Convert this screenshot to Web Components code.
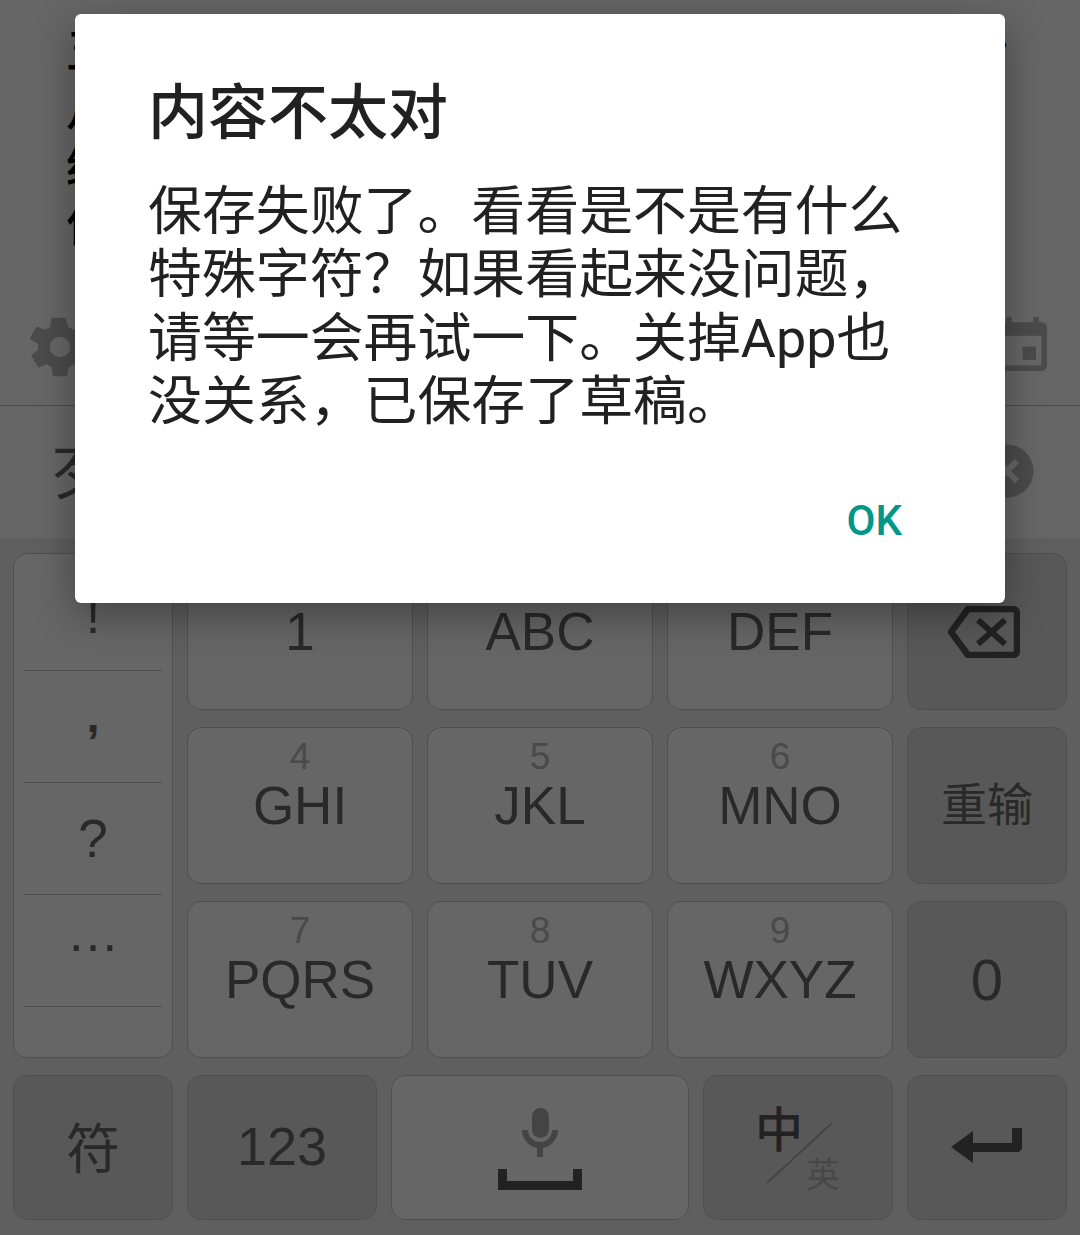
<!DOCTYPE html>
<html>
<head>
<meta charset="utf-8">
<style>
  html, body { margin: 0; padding: 0; height: 100%; overflow: hidden; }
  body { font-family: "Liberation Sans", "Noto Sans CJK SC", sans-serif; }
</style>
</head>
<body>
<x-screen>
  <x-editor></x-editor>
  <x-keyboard>
    <x-symbols></x-symbols>
    <x-key style="grid-area:1/2"><span>1</span></x-key>
    <x-key style="grid-area:1/3"><span>ABC</span></x-key>
    <x-key style="grid-area:1/4"><span>DEF</span></x-key>
    <x-key dark style="grid-area:1/5;padding-right:6px">
      <svg width="72" height="52" viewBox="0 0 72 52"><path d="M20 3H65a4 4 0 0 1 4 4V45a4 4 0 0 1-4 4H20L3 26Z" fill="none" stroke="#555" stroke-width="6.500" stroke-linejoin="round"/><path d="M30 14L57 38M57 14L30 38" stroke="#555" stroke-width="6"/></svg>
    </x-key>
    <x-key num="4" style="grid-area:2/2"><span>GHI</span></x-key>
    <x-key num="5" style="grid-area:2/3"><span>JKL</span></x-key>
    <x-key num="6" style="grid-area:2/4"><span>MNO</span></x-key>
    <x-key dark style="grid-area:2/5;font-size:46px"><span>重输</span></x-key>
    <x-key num="7" style="grid-area:3/2"><span>PQRS</span></x-key>
    <x-key num="8" style="grid-area:3/3"><span>TUV</span></x-key>
    <x-key num="9" style="grid-area:3/4"><span>WXYZ</span></x-key>
    <x-key dark style="grid-area:3/5;font-size:58px"><span>0</span></x-key>
    <x-bottom-row style="grid-area:4/1/5/6"></x-bottom-row>
  </x-keyboard>
  <x-dialog heading="内容不太对">保存失败了。看看是不是有什么特殊字符？如果看起来没问题，请等一会再试一下。关掉App也没关系，已保存了草稿。</x-dialog>
</x-screen>

<script>
class XScreen extends HTMLElement {
  constructor() {
    super();
    this.attachShadow({ mode: "open" });
    this.shadowRoot.innerHTML = `
      <style>
        :host { display: flex; flex-direction: column; position: relative; width: 1080px; height: 1235px; overflow: hidden; background: #fff; }
      </style>
      <slot></slot>
    `;
  }
}

class XEditor extends HTMLElement {
  constructor() {
    super();
    this.attachShadow({ mode: "open" });
    this.shadowRoot.innerHTML = `
      <style>
        :host { display: block; height: 538px; color: #000; flex: none; }
        .text { height: 280px; padding: 22px 72px 0 66px; box-sizing: border-box; font-size: 47px; line-height: 58px; overflow: hidden; white-space: nowrap; font-weight: 500; }
        .first { display: flex; justify-content: space-between; }
        .tools { height: 126px; display: flex; justify-content: space-between; align-items: center; padding: 8px 25px 0 25px; box-sizing: border-box; border-bottom: 1px solid #bbb; }
        .title { height: 132px; display: flex; align-items: center; justify-content: space-between; padding: 0 46px 0 50px; font-size: 58px; color: #666; box-sizing: border-box; }
        .title span { margin-bottom: 6px; }
        .title svg { margin-bottom: 2px; }
      </style>
      <div class="text"><div class="first"><span>五</span><span>行</span></div>月<br>经<br>作</div>
      <div class="tools">
        <svg width="70" height="70" viewBox="0 0 24 24" fill="#bbb"><path d="M19.4 13a7.5 7.5 0 0 0 0-2l2.1-1.6a.5.5 0 0 0 .1-.6l-2-3.5a.5.5 0 0 0-.6-.2l-2.5 1a7.3 7.3 0 0 0-1.7-1L14 2.400a.5.5 0 0 0-.5-.4h-4a.5.5 0 0 0-.5.4l-.4 2.700a7.3 7.3 0 0 0-1.700 1l-2.500-1a.5.5 0 0 0-.6.2l-2 3.500a.5.5 0 0 0 .1.6L4.500 11a7.500 7.500 0 0 0 0 2l-2.100 1.600a.5.5 0 0 0-.1.6l2 3.500c.1.2.4.3.6.2l2.500-1c.5.4 1.100.7 1.700 1l.4 2.700c0 .2.2.4.5.4h4c.3 0 .5-.2.5-.4l.4-2.700a7.300 7.300 0 0 0 1.700-1l2.500 1c.2.1.5 0 .6-.2l2-3.500a.5.5 0 0 0-.1-.6zM12 15.500a3.500 3.500 0 1 1 0-7 3.500 3.500 0 0 1 0 7z"/></svg>
        <svg width="65" height="65" viewBox="0 0 24 24" fill="#bbb"><path d="M17 12h-5v5h5v-5zM16 1v2H8V1H6v2H5c-1.110 0-1.990.9-1.990 2L3 19c0 1.100.89 2 2 2h14c1.100 0 2-.9 2-2V5c0-1.100-.9-2-2-2h-1V1h-2zm3 18H5V8h14v11z"/></svg>
      </div>
      <div class="title">
        <span>歹</span>
        <svg width="54" height="54" viewBox="0 0 54 54"><circle cx="27" cy="27" r="26.500" fill="#bbb"/><path d="M17 17L37 37M37 17L17 37" stroke="#fff" stroke-width="6"/></svg>
      </div>
    `;
  }
}

class XKeyboard extends HTMLElement {
  constructor() {
    super();
    this.attachShadow({ mode: "open" });
    this.shadowRoot.innerHTML = `
      <style>
        :host {
          display: grid; flex: 1; background: #eeeeee; box-sizing: border-box;
          padding: 15px 13px;
          grid-template-columns: 160px 226px 226px 226px 160px;
          grid-template-rows: 157px 157px 157px 145px;
          column-gap: 14px; row-gap: 17px;
        }
      </style>
      <slot></slot>
    `;
  }
}

class XKey extends HTMLElement {
  constructor() {
    super();
    const num = this.getAttribute("num");
    this.attachShadow({ mode: "open" });
    this.shadowRoot.innerHTML = `
      <style>
        :host {
          display: flex; flex-direction: column; align-items: center; justify-content: center;
          box-sizing: border-box; background: #fff; border: 1px solid #c6c6c6; border-radius: 14px;
          color: #666; font-size: 53px; line-height: 53px;
        }
        :host([dark]) { background: #dcdcdc; }
        :host([num]) { padding-bottom: 39px; }
        .num { font-size: 37px; line-height: 34px; color: #b8b8b8; margin-bottom: 5px; }
      </style>
      ${num ? `<div class="num">${num}</div>` : ""}
      <slot></slot>
    `;
  }
}

class XSymbols extends HTMLElement {
  constructor() {
    super();
    this.attachShadow({ mode: "open" });
    this.shadowRoot.innerHTML = `
      <style>
        :host {
          grid-area: 1 / 1 / 4 / 2; display: flex; flex-direction: column; box-sizing: border-box;
          background: #fff; border: 1px solid #c6c6c6; border-radius: 14px; padding: 5px 10px 0;
          color: #666; font-size: 53px;
        }
        div { flex: none; height: 112px; box-sizing: border-box; display: flex; align-items: center; justify-content: center; border-bottom: 1px solid #c6c6c6; }
        .comma { padding-bottom: 22px; font-weight: 700; font-size: 47px; }
        .dots { padding-bottom: 36px; }
      </style>
      <div>!</div><div class="comma">,</div><div>?</div><div class="dots">…</div>
    `;
  }
}

class XBottomRow extends HTMLElement {
  constructor() {
    super();
    this.attachShadow({ mode: "open" });
    this.shadowRoot.innerHTML = `
      <style>
        :host { display: flex; gap: 14px; color: #666; font-size: 54px; }
        .k { display: flex; align-items: center; justify-content: center; position: relative; box-sizing: border-box; height: 145px; padding-bottom: 4px; background: #dcdcdc; border: 1px solid #c6c6c6; border-radius: 14px; }
        .light { background: #fff; padding: 3px 0 0; }
        .zh { position: absolute; left: 51px; top: 30px; font-size: 48px; line-height: 50px; color: #555; font-weight: 500; }
        .en { position: absolute; left: 102px; top: 83px; font-size: 34px; line-height: 33px; color: #b4b4b4; }
        .slash { position: absolute; left: 62px; top: 46px; }
      </style>
      <div class="k" style="width:160px">符</div>
      <div class="k" style="width:190px">123</div>
      <div class="k light" style="width:298px">
        <svg width="84" height="82" viewBox="0 0 84 82">
          <rect x="34" y="0" width="17" height="30" rx="8.500" fill="#aaa"/>
          <path d="M27 22a15 15 0 0 0 30 0" fill="none" stroke="#aaa" stroke-width="6"/>
          <rect x="39" y="38" width="6" height="11" fill="#aaa"/>
          <path d="M0 61H9V73H75V61H84V82H0Z" fill="#555"/>
        </svg>
      </div>
      <div class="k" style="width:190px">
        <span class="zh">中</span>
        <svg class="slash" width="68" height="62" viewBox="0 0 68 62"><path d="M1 61L66 1" stroke="#aaa" stroke-width="2"/></svg>
        <span class="en">英</span>
      </div>
      <div class="k" style="width:160px">
        <svg width="72" height="36" viewBox="0 0 72 36"><path d="M0 19L22 3V15H61V0H71V21L68 24H22V35Z" fill="#555"/></svg>
      </div>
    `;
  }
}

class XDialog extends HTMLElement {
  constructor() {
    super();
    this.attachShadow({ mode: "open" });
    this.shadowRoot.innerHTML = `
      <style>
        :host { position: absolute; inset: 0; display: block; background: rgba(0,0,0,.6); }
        .box {
          position: absolute; left: 75px; top: 14px; width: 930px; height: 589px; box-sizing: border-box;
          background: #fff; border-radius: 6px; padding: 57px 72px 0 73px;
          display: flex; flex-direction: column; box-shadow: 0 12px 40px rgba(0,0,0,.35);
          color: #212121;
        }
        h2 { margin: 0; font-size: 60px; line-height: 74px; font-weight: 500; font-family: "Noto Sans CJK SC", sans-serif; }
        p { margin: 35px 0 0; font-size: 53.900px; line-height: 63.300px; font-family: Roboto, "Noto Sans CJK SC", sans-serif; }
        .ok { margin-top: auto; margin-bottom: 58px; margin-right: 31px; align-self: flex-end; color: #009688; font: 500 42px/48px Roboto, sans-serif; }
      </style>
      <div class="box">
        <h2>${this.getAttribute("heading")}</h2>
        <p><slot></slot></p>
        <div class="ok">OK</div>
      </div>
    `;
  }
}

customElements.define("x-screen", XScreen);
customElements.define("x-editor", XEditor);
customElements.define("x-keyboard", XKeyboard);
customElements.define("x-key", XKey);
customElements.define("x-symbols", XSymbols);
customElements.define("x-bottom-row", XBottomRow);
customElements.define("x-dialog", XDialog);
</script>
</body>
</html>
